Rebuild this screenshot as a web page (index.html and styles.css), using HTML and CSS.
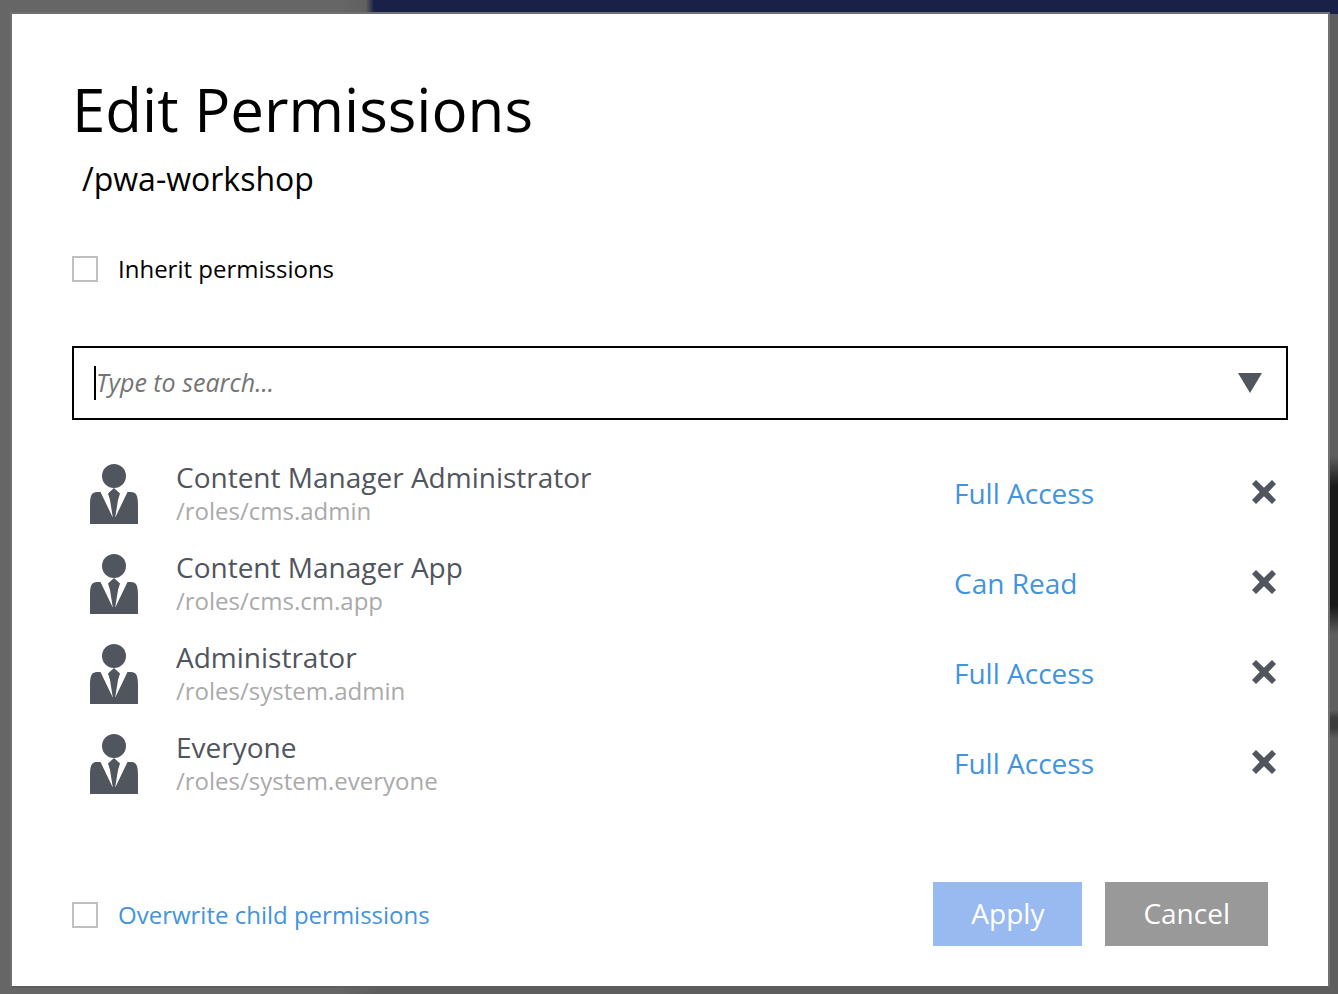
FILE: index.html
```html
<!DOCTYPE html>
<html lang="en">

<head>
  <meta charset="utf-8">
  <meta name="viewport" content="width=device-width, initial-scale=1.0" />
  <title>Edit Permissions</title>
  <link rel="stylesheet" href="styles.css">
</head>

<body>
  <svg width="0" height="0" class="sprite" aria-hidden="true">
    <symbol id="role" viewBox="0 0 48 60">
      <circle cx="24" cy="12" r="12" />
      <path d="M10.500 28 H7 C2 28 0 31 0 41 V60 H48 V41 C48 31 46 28 41 28 H37.500 L25.500 53 H22.500 Z" />
      <path d="M24 24 L30 29.500 L28 36 L25.200 53.500 H22.800 L20 36 L18 29.500 Z" />
    </symbol>
    <symbol id="remove" viewBox="0 0 24 24">
      <path d="M4 0 L12 7.700 L20 0 L24 4 L16.300 12 L24 20 L20 24 L12 16.300 L4 24 L0 20 L7.700 12 L0 4 Z" />
    </symbol>
  </svg>

  <main class="dialog" role="dialog" aria-labelledby="dialog-title">
    <h1 id="dialog-title" class="title">Edit Permissions</h1>
    <p class="path">/pwa-workshop</p>

    <label class="check inherit">
      <input type="checkbox">
      Inherit permissions
    </label>

    <div class="search">
      <span class="caret"></span>
      <input type="text" placeholder="Type to search..." aria-label="Search principals">
      <button type="button" class="dropdown" aria-label="Show options">
        <svg width="24" height="20" viewBox="0 0 24 20"><path d="M0 0 H24 L12 20 Z" /></svg>
      </button>
    </div>

    <ul class="roles">
      <li>
        <svg class="role-icon"><use href="#role" /></svg>
        <div class="role">
          <span class="name">Content Manager Administrator</span>
          <span class="key">/roles/cms.admin</span>
        </div>
        <a href="#" class="access">Full Access</a>
        <button type="button" class="remove" aria-label="Remove"><svg><use href="#remove" /></svg></button>
      </li>
      <li>
        <svg class="role-icon"><use href="#role" /></svg>
        <div class="role">
          <span class="name">Content Manager App</span>
          <span class="key">/roles/cms.cm.app</span>
        </div>
        <a href="#" class="access">Can Read</a>
        <button type="button" class="remove" aria-label="Remove"><svg><use href="#remove" /></svg></button>
      </li>
      <li>
        <svg class="role-icon"><use href="#role" /></svg>
        <div class="role">
          <span class="name">Administrator</span>
          <span class="key">/roles/system.admin</span>
        </div>
        <a href="#" class="access">Full Access</a>
        <button type="button" class="remove" aria-label="Remove"><svg><use href="#remove" /></svg></button>
      </li>
      <li>
        <svg class="role-icon"><use href="#role" /></svg>
        <div class="role">
          <span class="name">Everyone</span>
          <span class="key">/roles/system.everyone</span>
        </div>
        <a href="#" class="access">Full Access</a>
        <button type="button" class="remove" aria-label="Remove"><svg><use href="#remove" /></svg></button>
      </li>
    </ul>

    <footer>
      <label class="check overwrite">
        <input type="checkbox">
        Overwrite child permissions
      </label>
      <button type="button" class="btn apply">Apply</button>
      <button type="button" class="btn cancel">Cancel</button>
    </footer>
  </main>
</body>

</html>
```

FILE: styles.css
```css
* {
  box-sizing: border-box;
}

body {
  display: flex;
  min-height: 100vh;
  margin: 0;
  padding: 12px 8px 6px 10px;
  font-family: "Open Sans", "Noto Sans", sans-serif;
  color: #000;
  /* dimmed page behind the dialog */
  background:
    linear-gradient(90deg, transparent 366px, #1a2148 374px) top / 100% 14px no-repeat,
    linear-gradient(#5e5e5e 456px, #191919 486px, #191919 606px, #5e5e5e 634px, #5e5e5e 710px, #3c3c3c 718px, #3c3c3c 728px, #5e5e5e 738px) right / 10px 100% no-repeat,
    linear-gradient(90deg, #666 340px, #5e5e5e 376px);
}

.sprite {
  position: absolute;
}

.dialog {
  display: flex;
  flex: 1;
  flex-direction: column;
  padding: 55px 40px 40px 60px;
  border: 2px solid #707070;
  border-bottom-color: #5e5e5e;
  background: #fff;
}

.title {
  margin: 0;
  font-size: 60px;
  font-weight: 400;
  line-height: 80px;
}

.path {
  margin: 8px 0 0;
  padding-left: 10px;
  font-size: 32px;
  line-height: 44px;
}

.check {
  display: flex;
  align-items: center;
  gap: 20px;
  font-size: 24px;
  line-height: 32px;
}

.check input {
  width: 26px;
  height: 26px;
  margin: 0;
  border: 2px solid #c0c0c0;
  background: #fff;
  appearance: none;
}

.inherit {
  align-self: flex-start;
  margin-top: 52px;
}

.search {
  display: flex;
  align-items: center;
  height: 74px;
  margin-top: 61px;
  padding: 0 24px 0 20px;
  border: 2px solid #000;
}

.caret {
  width: 2px;
  height: 34px;
  background: #000;
}

.search input {
  flex: 1;
  min-width: 0;
  padding: 0 0 2px;
  border: 0;
  outline: 0;
  font: italic 25px "Open Sans", "Noto Sans", sans-serif;
}

.search input::placeholder {
  color: #757575;
}

.dropdown,
.remove {
  display: block;
  padding: 0;
  border: 0;
  background: none;
  fill: #50555e;
}

.dropdown svg,
.remove svg {
  display: block;
}

.roles {
  margin: 29px 0 0;
  padding: 0;
  list-style: none;
}

.roles li {
  display: grid;
  grid-template-columns: 104px 1fr 298px 36px;
  align-items: center;
  height: 90px;
}

.role-icon {
  width: 48px;
  height: 60px;
  margin-left: 18px;
  fill: #50555e;
}

.name,
.key {
  display: block;
  line-height: 34px;
}

.name {
  font-size: 28px;
  color: #50555e;
}

.key {
  font-size: 24px;
  color: #aaa;
}

.access {
  padding-bottom: 2px;
  font-size: 28px;
  line-height: 36px;
  color: #4294dd;
  text-decoration: none;
}

.remove {
  padding-bottom: 4px;
}

.remove svg {
  width: 24px;
  height: 24px;
}

footer {
  display: flex;
  align-items: center;
  gap: 23px;
  margin-top: auto;
  padding-right: 20px;
}

.overwrite {
  margin-right: auto;
  padding-top: 2px;
  color: #4294dd;
}

.btn {
  height: 64px;
  padding: 0 38px 2px;
  border: 0;
  font: 28px "Open Sans", "Noto Sans", sans-serif;
  color: #fff;
}

.apply {
  background: #99baf1;
}

.cancel {
  background: #999;
}
```
